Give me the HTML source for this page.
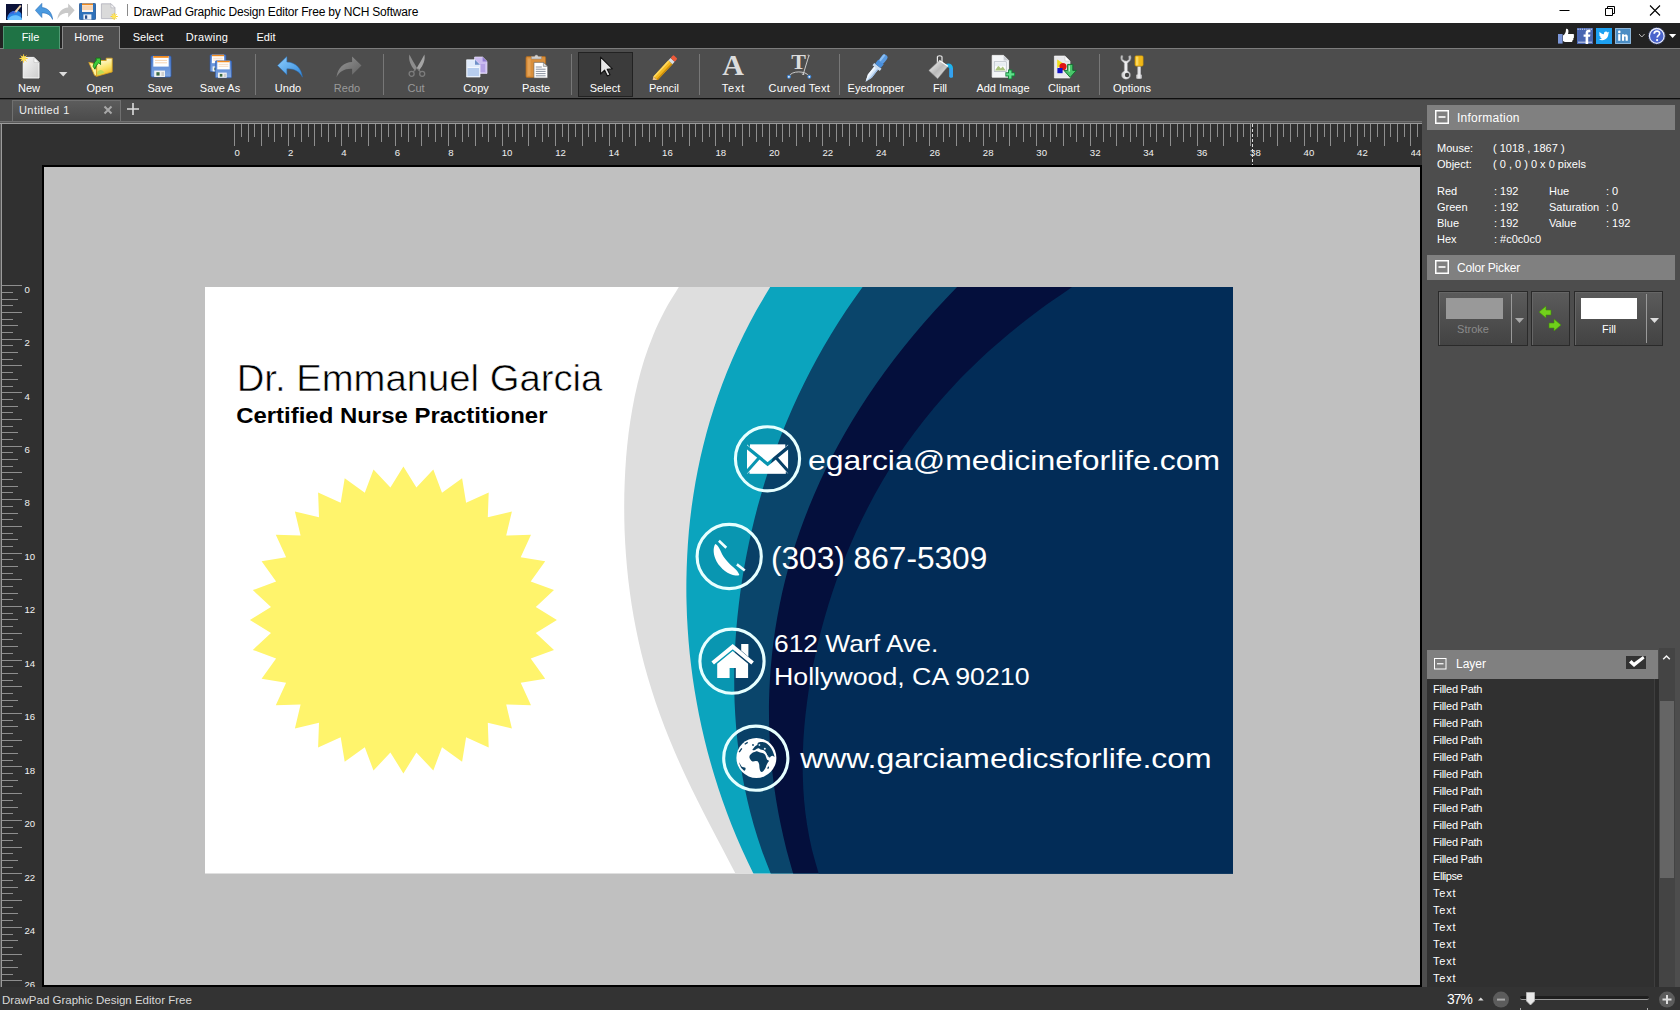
<!DOCTYPE html>
<html><head><meta charset="utf-8"><title>DrawPad</title>
<style>
*{box-sizing:border-box;margin:0;padding:0}
html,body{width:1680px;height:1010px;overflow:hidden;background:#4d4d4d;font-family:"Liberation Sans",sans-serif;font-size:11px;color:#fff}
.a{position:absolute}
.t{position:absolute;white-space:nowrap;line-height:1}
#titlebar{left:0;top:0;width:1680px;height:23px;background:#fff}
#tabrow{left:0;top:23px;width:1680px;height:25px;background:#222}
#tabline{left:0;top:48px;width:1680px;height:1px;background:#7d7d7d}
#ribbon{left:0;top:49px;width:1680px;height:49px;background:#4d4d4d}
#ribline{left:0;top:98px;width:1680px;height:2px;background:linear-gradient(#0e0e0e 0 60%,#3a3a3a 60% 100%)}
#docrow{left:0;top:100px;width:1422px;height:22px;background:#4d4d4d}
.sep{position:absolute;top:54px;width:1px;height:41px;background:#777}
.lbl{position:absolute;top:82px;width:90px;text-align:center;font-size:11px;line-height:12px;color:#fff;white-space:nowrap}
.lbl.dis{color:#9a9a9a}
.mtab{position:absolute;top:26px;height:23px;line-height:22px;text-align:center;font-size:11px;color:#fff}
</style></head><body>
<div id="titlebar" class="a"></div>
<div id="tabrow" class="a"></div>
<div id="ribbon" class="a"></div>
<div id="tabline" class="a"></div>
<div id="ribline" class="a"></div>
<div id="docrow" class="a"></div>
<!-- title text -->
<div class="t" id="title" style="left:133.5px;top:6px;font-size:12px;color:#000;letter-spacing:-0.19px">DrawPad Graphic Design Editor Free by NCH Software</div>
<!-- window buttons -->
<svg class="a" style="left:1540px;top:0" width="140" height="23" viewBox="0 0 140 23">
<path d="M19.5 10.5h10" stroke="#000" stroke-width="1" fill="none"/>
<path d="M65.5 8.5h7v7h-7z M67.5 8.5v-2h7v7h-2" stroke="#000" stroke-width="1" fill="none"/>
<path d="M110 5.5l10 10 M120 5.5l-10 10" stroke="#000" stroke-width="1.1" fill="none"/>
</svg>
<!-- menu tabs -->
<div class="mtab" style="left:3px;width:57px;background:#1f7345;border:1px solid #4f9a73;border-bottom:none;line-height:20px;text-indent:-2px">File</div>
<div class="mtab" style="left:62px;width:58px;background:#4d4d4d;border:1px solid #8a8a8a;border-bottom:none;line-height:20px;text-indent:-4px">Home</div>
<div class="mtab" style="left:120px;width:56px">Select</div>
<div class="mtab" style="left:177px;width:60px;letter-spacing:0.3px">Drawing</div>
<div class="mtab" style="left:240px;width:52px">Edit</div>
<!-- ribbon separators -->
<div class="sep" style="left:255px"></div>
<div class="sep" style="left:383px"></div>
<div class="sep" style="left:571px"></div>
<div class="sep" style="left:699px"></div>
<div class="sep" style="left:839px"></div>
<div class="sep" style="left:1099px"></div>
<!-- select pressed box -->
<div class="a" style="left:578px;top:52px;width:55px;height:45px;background:#3b3b3b;border:1px solid #222"></div>
<!-- labels -->
<div class="lbl" style="left:-16px">New</div>
<div class="lbl" style="left:55px">Open</div>
<div class="lbl" style="left:115px">Save</div>
<div class="lbl" style="left:175px">Save As</div>
<div class="lbl" style="left:243px">Undo</div>
<div class="lbl dis" style="left:302px">Redo</div>
<div class="lbl dis" style="left:371px">Cut</div>
<div class="lbl" style="left:431px">Copy</div>
<div class="lbl" style="left:491px">Paste</div>
<div class="lbl" style="left:560px">Select</div>
<div class="lbl" style="left:619px">Pencil</div>
<div class="lbl" style="left:688.5px;letter-spacing:0.8px">Text</div>
<div class="lbl" style="left:754.3px;letter-spacing:0.3px">Curved Text</div>
<div class="lbl" style="left:831px">Eyedropper</div>
<div class="lbl" style="left:895px">Fill</div>
<div class="lbl" style="left:958px">Add Image</div>
<div class="lbl" style="left:1019px">Clipart</div>
<div class="lbl" style="left:1087px">Options</div>
<!-- doc tab -->
<div class="a" style="left:12px;top:100px;width:109px;height:22px;background:linear-gradient(#5c5c5c,#4a4a4a);border:1px solid #707070;border-bottom:none"></div>
<div class="t" style="left:19px;top:105px;font-size:11px;color:#eee;letter-spacing:0.42px">Untitled 1</div>
<svg class="a" style="left:103px;top:105px" width="10" height="10"><path d="M1.5 1.5l7 7M8.5 1.5l-7 7" stroke="#a8a8a8" stroke-width="2"/></svg>
<svg class="a" style="left:126px;top:102px" width="14" height="14"><path d="M7 1v12M1 7h12" stroke="#ddd" stroke-width="1.6"/></svg>
<svg width="0" height="0" style="position:absolute"><defs>
<linearGradient id="gPage" x1="0" y1="0" x2="1" y2="1"><stop offset="0" stop-color="#f6f6f6"/><stop offset="1" stop-color="#cdcdcd"/></linearGradient>
<linearGradient id="gFlop" x1="0" y1="0" x2="0" y2="1"><stop offset="0" stop-color="#4f7fd0"/><stop offset="1" stop-color="#7ea6e2"/></linearGradient>
<linearGradient id="gUndo" x1="0" y1="0" x2="1" y2="1"><stop offset="0" stop-color="#8fd0ff"/><stop offset="1" stop-color="#2f86d8"/></linearGradient>
<linearGradient id="gRedo" x1="1" y1="0" x2="0" y2="1"><stop offset="0" stop-color="#9a9a9a"/><stop offset="1" stop-color="#5e5e5e"/></linearGradient>
<linearGradient id="gFold" x1="0" y1="0" x2="1" y2="1"><stop offset="0" stop-color="#fff3a6"/><stop offset="1" stop-color="#f0b91e"/></linearGradient>
<linearGradient id="gBuck" x1="0" y1="0" x2="1" y2="1"><stop offset="0" stop-color="#fdfdfd"/><stop offset="0.5" stop-color="#b9b9b9"/><stop offset="1" stop-color="#f0f0f0"/></linearGradient>


</defs></svg>
<!-- New -->
<svg class="a" style="left:18px;top:52px" width="26" height="28" viewBox="0 0 26 28">
 <path d="M5.2 5.400h10.800l5 5v15.600h-15.800z" fill="url(#gPage)" stroke="#fff" stroke-width="0.9"/>
 <path d="M16 5.400v5h5z" fill="#fbfbfb" stroke="#b5b5b5" stroke-width="0.5"/>
 <g stroke="#ffd23c" stroke-width="1"><path d="M5.600 2.400v8.200M1.500 6.500h8.200M2.700 3.600l5.800 5.800M8.500 3.600l-5.800 5.800"/></g>
 <circle cx="5.600" cy="6.500" r="2.400" fill="#ffe35a"/>
</svg>
<svg class="a" style="left:59px;top:72px" width="9" height="5"><path d="M0 0h8.400l-4.200 4.400z" fill="#ddd"/></svg>
<!-- Open -->
<svg class="a" style="left:86px;top:52px" width="30" height="28" viewBox="0 0 30 28">
 <defs><linearGradient id="gFold2" x1="0.300" y1="0" x2="0.600" y2="1"><stop offset="0" stop-color="#fffde8"/><stop offset="0.550" stop-color="#fbe46a"/><stop offset="1" stop-color="#f0b420"/></linearGradient></defs>
 <path d="M2.800 10.400L7.500 11.300L10.700 18.300V24.300L8.500 23.300Z" fill="#fff29c" stroke="#d69a1a" stroke-width="0.800"/>
 <path d="M10.700 11.900L15.100 8.500H20.200V6.200H26.200V19.900L10.700 24.300Z" fill="url(#gFold2)" stroke="#d8a21a" stroke-width="0.800"/>
 <path d="M11.400 20.600c.6-2.600 3.400-3.400 5.600-1.600l1.600 1.800-7.200 2.200z" fill="#b5dc5a" opacity=".9"/>
 <path d="M9.700 6.200L14.400 6L14.600 12.600L12.800 10.900C11.200 12 9.800 14.200 8.900 17.200L7.100 14.300C7.600 11.600 8.800 9.600 10.400 8.300Z" fill="#3ecb3e" stroke="#0c6e0c" stroke-width="0.800" stroke-linejoin="round"/>
</svg>
<!-- Save -->
<svg class="a" style="left:150px;top:55px" width="22" height="24" viewBox="-1 -1 22 24"><g>
 <rect x="0" y="0" width="20" height="21" rx="1.2" fill="url(#gFlop)" stroke="#2f5db3" stroke-width="0.8"/>
 <rect x="2.3" y="0" width="15.4" height="10.6" fill="#fff"/>
 <rect x="2.3" y="0" width="15.4" height="1.8" fill="#f08a1e"/>
 <path d="M4 4.4h12M4 6.8h12" stroke="#f4c9a0" stroke-width="0.8"/>
 <rect x="3.2" y="14.6" width="10.8" height="6.4" fill="#f2f2f2"/>
 <rect x="5.4" y="16.2" width="3.2" height="3.4" fill="#3a6a44"/>
 <rect x="10.4" y="16" width="2.6" height="4" fill="#cfcfcf"/>
</g></svg>
<!-- Save As -->
<svg class="a" style="left:209px;top:54px" width="18" height="19" viewBox="-1 -1 22 24"><g>
 <rect x="0" y="0" width="20" height="21" rx="1.2" fill="url(#gFlop)" stroke="#2f5db3" stroke-width="0.8"/>
 <rect x="2.3" y="0" width="15.4" height="10.6" fill="#fff"/>
 <rect x="2.3" y="0" width="15.4" height="1.8" fill="#f08a1e"/>
 <path d="M4 4.4h12M4 6.8h12" stroke="#f4c9a0" stroke-width="0.8"/>
 <rect x="3.2" y="14.6" width="10.8" height="6.4" fill="#f2f2f2"/>
 <rect x="5.4" y="16.2" width="3.2" height="3.4" fill="#3a6a44"/>
 <rect x="10.4" y="16" width="2.6" height="4" fill="#cfcfcf"/>
</g></svg>
<svg class="a" style="left:214px;top:60px" width="19" height="19" viewBox="-1 -1 22 23.500"><g>
 <rect x="0" y="0" width="20" height="21" rx="1.2" fill="url(#gFlop)" stroke="#2f5db3" stroke-width="0.8"/>
 <rect x="2.3" y="0" width="15.4" height="10.6" fill="#fff"/>
 <rect x="2.3" y="0" width="15.4" height="1.8" fill="#f08a1e"/>
 <path d="M4 4.4h12M4 6.8h12" stroke="#f4c9a0" stroke-width="0.8"/>
 <rect x="3.2" y="14.6" width="10.8" height="6.4" fill="#f2f2f2"/>
 <rect x="5.4" y="16.2" width="3.2" height="3.4" fill="#3a6a44"/>
 <rect x="10.4" y="16" width="2.6" height="4" fill="#cfcfcf"/>
</g></svg>
<!-- Undo / Redo -->
<svg class="a" style="left:277px;top:56px" width="26" height="22" viewBox="-0.500 -0.500 25 21"><path d="M0 8.6L9 0v5.2c8 .2 14 5.800 15 14.600c-3-5.600-8-8.400-15-8v5.600z" fill="url(#gUndo)" stroke="#2a6fb8" stroke-width="0.5"/></svg>
<svg class="a" style="left:336px;top:56px" width="26" height="22" viewBox="-0.500 -0.500 25 21"><g transform="translate(24 0) scale(-1 1)"><path d="M0 8.6L9 0v5.2c8 .2 14 5.800 15 14.600c-3-5.600-8-8.400-15-8v5.600z" fill="url(#gRedo)"/></g></svg>
<!-- Cut (disabled) -->
<svg class="a" style="left:406px;top:53px" width="22" height="27" viewBox="0 0 22 27">
 <path d="M3.400 1.600c-1 5 .6 10.400 5.600 16.200l2-2.800c-2.600-4.600-5.400-9-7.600-13.400z" fill="#8d8d8d"/>
 <path d="M18.400 1.600c1 5-.6 10.400-5.600 16.200l-2-2.800c2.600-4.600 5.400-9 7.600-13.400z" fill="#a4a4a4"/>
 <circle cx="5.600" cy="20.800" r="2.500" fill="none" stroke="#7c7c7c" stroke-width="1.300"/>
 <circle cx="16.200" cy="20.800" r="2.500" fill="none" stroke="#7c7c7c" stroke-width="1.300"/>
 <path d="M7.300 18.900l2.600-3M14.500 18.900l-2.600-3" stroke="#7c7c7c" stroke-width="1.300"/>
</svg>
<!-- Copy -->
<svg class="a" style="left:464px;top:55px" width="26" height="24" viewBox="0 0 26 24">
 <path d="M10.600 2h8l4.400 4.400v12h-12.400z" fill="#cbbcf0" stroke="#e9e2fb" stroke-width="0.7"/>
 <path d="M18.600 2v4.400h4.400z" fill="#8f7ad0"/>
 <path d="M13 9h8v8h-8z" fill="#b5a2e6"/>
 <path d="M2.600 4.800h8.400l5 5v12.200h-13.400z" fill="#dfeafb" stroke="#f5f9ff" stroke-width="0.7"/>
 <path d="M11 4.800v5h5z" fill="#6f8fc8"/>
 <path d="M3.600 12.800h11.400v8.200h-11.400z" fill="#b7cdee"/>
 <path d="M3.600 12.400h11.400" stroke="#fff" stroke-width="0.8"/>
</svg>
<!-- Paste -->
<svg class="a" style="left:524px;top:54px" width="26" height="26" viewBox="0 0 26 26">
 <rect x="2" y="2.600" width="19.600" height="20.800" rx="1.200" fill="#d98f3c" stroke="#b06a1e" stroke-width="0.8"/>
 <rect x="3.600" y="4.400" width="3" height="17.400" fill="#e8aa5e" opacity=".7"/>
 <path d="M7.400 2.600h3l1.200-1.600h1.600l1.200 1.600h3v2.400h-10z" fill="#d0d0d0" stroke="#8a8a8a" stroke-width="0.500"/>
 <path d="M10 8.400h9.400l4.200 4v11.600h-13.600z" fill="#fff" stroke="#666" stroke-width="0.600"/>
 <path d="M19.400 8.400v4h4.200z" fill="#ddd" stroke="#666" stroke-width="0.500"/>
 <path d="M11.800 13h6M11.800 15.200h9.800M11.800 17.400h9.800M11.800 19.600h9.800M11.800 21.800h9.800" stroke="#7d8694" stroke-width="0.900"/>
</svg>
<!-- Select cursor -->
<svg class="a" style="left:598px;top:55px" width="18" height="22" viewBox="0 0 18 22">
 <path d="M2.600 2.200v16.800l4-3.800 2.800 5.800 2.600-1.200-2.800-5.600 5.200-.4z" fill="#e8e8e8" stroke="#111" stroke-width="1.100" stroke-linejoin="round"/>
</svg>
<!-- Pencil -->
<svg class="a" style="left:652px;top:54px" width="28" height="26" viewBox="0 0 28 26">
 <g transform="rotate(-47 14 13)">
  <rect x="-1.500" y="10.200" width="22" height="5.600" fill="#f3b81f"/>
  <rect x="-1.500" y="10.200" width="22" height="1.700" fill="#ffd95e"/>
  <rect x="-1.500" y="14.300" width="22" height="1.500" fill="#c98a0c"/>
  <path d="M-1.500 10.200l-4.600 2.800 4.600 2.800z" fill="#f1c58a"/>
  <path d="M-4.500 12.100l-1.900.9 1.900.9z" fill="#111"/>
  <rect x="20.500" y="10.200" width="3.200" height="5.600" fill="#d9dde2"/>
  <rect x="23.700" y="10.200" width="4.200" height="5.600" rx="1.200" fill="#ee5a3a"/>
 </g>
</svg>
<!-- Text A -->
<div class="t" style="left:720.500px;top:49.500px;font-family:'Liberation Serif',serif;font-size:30px;line-height:30px;font-weight:bold;color:#dcdcdc;width:25px;text-align:center">A</div>
<!-- Curved text -->
<div class="t" style="left:790px;top:50.500px;font-family:'Liberation Serif',serif;font-size:22px;line-height:22px;font-weight:bold;color:#dcdcdc;width:17px;text-align:center">T</div>
<svg class="a" style="left:785px;top:52px" width="30" height="28" viewBox="0 0 30 28">
 <path d="M4 24.400c2.400-6 16.800-6 20.400 0" fill="none" stroke="#d8d8d8" stroke-width="0.900"/>
 <path d="M23.800 3.800l-5.600 18.600M22.600 3.200c.8-.2 1.800.2 2.200.8M16.800 21.800c.6.600 1.600.9 2.400.7" fill="none" stroke="#d8d8d8" stroke-width="0.900"/>
 <circle cx="3.900" cy="24.800" r="2" fill="#3f86d6"/><circle cx="3.900" cy="24.800" r="0.900" fill="#fff"/>
 <circle cx="24.300" cy="24.800" r="2" fill="#3f86d6"/><circle cx="24.300" cy="24.800" r="0.900" fill="#fff"/>
</svg>
<!-- Eyedropper -->
<svg class="a" style="left:862px;top:52px" width="30" height="30" viewBox="0 0 30 30">
 <g transform="rotate(-52 15 15)">
  <path d="M-3.600 15l7-2.500h11v5h-11z" fill="#d4e6f8"/>
  <path d="M-3.600 15l7-2.500h11v1.800h-11z" fill="#f2f8ff"/>
  <path d="M3.400 17.500h11v-1.200h-11l-7-1.300z" fill="#9dbfe6"/>
  <rect x="13.600" y="10.400" width="2.800" height="9.200" fill="#c8dcf2"/>
  <rect x="16.400" y="11.400" width="5.400" height="7.200" rx="1" fill="#4a8fdc"/>
  <rect x="21" y="12" width="9" height="6" rx="2.800" fill="#5a9be2"/>
  <rect x="21.500" y="12.400" width="8" height="2" rx="1" fill="#8fc0f2"/>
 </g>
</svg>
<!-- Fill bucket -->
<svg class="a" style="left:926px;top:52px" width="30" height="30" viewBox="0 0 30 30">
 <path d="M20 12c3.800-1.600 6.800.6 7 4.200v8.200c0 1.600-3.600 1.600-3.600 0v-7.200c0-1.800-1.200-2.400-2.600-1.800z" fill="#1cb4ee"/>
 <path d="M23.400 16.600v7.800c0 1.400 3.400 1.400 3.400 0v-7.600z" fill="#36a0f0"/>
 <path d="M11.400 11.400v-6.600c0-1.400 4.600-1.400 4.600 0v5.400" fill="none" stroke="#eaeaea" stroke-width="1.200"/>
 <path d="M2.800 18.400l10.600-10 8.600 5.800-10.400 12.600z" fill="url(#gBuck)" stroke="#8d8d8d" stroke-width="0.500"/>
 <path d="M13.400 8.400l8.600 5.800" stroke="#fff" stroke-width="1.200"/>
</svg>
<!-- Add Image -->
<svg class="a" style="left:990px;top:53px" width="28" height="28" viewBox="0 0 28 28">
 <path d="M2.200 2.400h11.400l5 5v16.800h-16.400z" fill="#f4f6f8" stroke="#fff" stroke-width="0.800"/>
 <path d="M13.600 2.400v5h5z" fill="#c9ccd2"/>
 <rect x="4.200" y="8.800" width="12" height="9.600" fill="#fdfdfd" stroke="#9aa3ad" stroke-width="0.600"/>
 <path d="M5 17.600l3.400-5 2.400 3 2-2.200 2.800 4.200z" fill="#a9c47c"/>
 <rect x="5" y="9.600" width="10.400" height="3.600" fill="#e8eef2"/>
 <path d="M20.200 16.600v9.600M15.400 21.400h9.600" stroke="#15803a" stroke-width="4.200"/>
 <path d="M20.200 17.400v8M16.200 21.400h8" stroke="#5fe08a" stroke-width="2.400"/>
</svg>
<!-- Clipart -->
<svg class="a" style="left:1052px;top:53px" width="30" height="28" viewBox="0 0 30 28">
 <path d="M2.400 3h10.600l5 5v17h-15.600z" fill="#e9e9ec" stroke="#fff" stroke-width="0.600"/>
 <path d="M13 3v5h5z" fill="#fff" stroke="#aaa" stroke-width="0.400"/>
 <path d="M5.200 6.400l5.800 3.800-5.800 5z" fill="#f0de1a"/>
 <circle cx="11" cy="13.600" r="3.600" fill="#e01414"/>
 <rect x="5.400" y="15" width="5.200" height="5.200" fill="#1212c8"/>
 <path d="M15.600 11.400h5.200v6h3.600l-6.200 7-6.200-7h3.600z" fill="#49c56a" stroke="#0e6a2c" stroke-width="0.900"/>
 <path d="M16.600 12.400h1.400v6h-1.400z" fill="#b8f2c6"/>
</svg>
<!-- Options -->
<svg class="a" style="left:1118px;top:53px" width="28" height="28" viewBox="0 0 28 28">
 <defs><linearGradient id="gWr" x1="0" y1="0" x2="1" y2="0"><stop offset="0" stop-color="#bdbdbd"/><stop offset="0.5" stop-color="#f4f4f6"/><stop offset="1" stop-color="#b4b4b8"/></linearGradient></defs>
 <path d="M3.100 2.400c-1 2.600-.2 5 1.600 6.400l1.500 1.200v8c-2.400 1-3.200 3.200-2.600 5.200.6 2 2.400 3 4.400 3s3.800-1 4.400-3c.6-2-.2-4.200-2.800-5.200v-8l1.500-1.200c1.800-1.400 2.600-3.800 1.600-6.200l-2 .4.200 3.400-2.200 1.600-2-.2-2.200-1.600.4-3.400z" fill="url(#gWr)" stroke="#8a8a8a" stroke-width="0.500"/>
 <circle cx="9" cy="22" r="2.200" fill="#444"/>
 <rect x="16.900" y="2.700" width="8.300" height="10.500" rx="1.400" fill="#f0b818" stroke="#b8860b" stroke-width="0.500"/>
 <rect x="18" y="3.600" width="2.400" height="8.800" fill="#ffe070" opacity=".8"/>
 <rect x="19.400" y="13.600" width="3.500" height="8.600" fill="url(#gWr)"/>
 <rect x="18.200" y="21.600" width="5.700" height="4.200" rx="0.800" fill="url(#gWr)"/>
</svg>
<!-- titlebar quick access -->
<svg class="a" style="left:6px;top:4px" width="16" height="16" viewBox="0 0 16 16">
 <rect width="16" height="16" fill="#0b1238"/>
 <path d="M1 14.500c1-5 5-8.500 11-7.500 2.500.5 3.500 2.500 3.500 4v4.500h-14.500z" fill="#2b86e8"/>
 <path d="M2 15c2-3 6-4.500 9.500-3.500 2 .6 3.500 1.500 4.500 3v1.500h-14z" fill="#69c3ff"/>
 <path d="M2.500 10.500c1.500-2.500 4.500-4 7-3.500l-1 2.500c-2-.3-4 .3-6 1z" fill="#3a63d8"/>
 <path d="M8.500 7.500l5.500-6.500 1.500 1-5 6.500z" fill="#e8cfa8"/>
 <path d="M8.800 7.200l1.600 1.200-1.800 1.400c-.8-.4-.8-1.600.2-2.600z" fill="#6a7cc8"/>
</svg>
<div class="a" style="left:27px;top:4px;width:1px;height:12px;background:#8a8a8a"></div>
<div class="a" style="left:127px;top:4px;width:1px;height:12px;background:#8a8a8a"></div>
<svg class="a" style="left:35px;top:3px" width="18" height="17" viewBox="-0.500 -0.500 25 21" preserveAspectRatio="none"><path d="M0 8.6L9 0v5.2c8 .2 14 5.800 15 14.600c-3-5.600-8-8.400-15-8v5.600z" fill="#4a9ae0" stroke="#2a6fb8" stroke-width="0.800"/></svg>
<svg class="a" style="left:57px;top:3px" width="18" height="17" viewBox="-0.500 -0.500 25 21" preserveAspectRatio="none"><g transform="translate(24 0) scale(-1 1)"><path d="M0 8.6L9 0v5.2c8 .2 14 5.800 15 14.600c-3-5.600-8-8.400-15-8v5.600z" fill="#c9c9c9"/></g></svg>
<svg class="a" style="left:79px;top:3px" width="17" height="17" viewBox="0 0 17 17">
 <rect x="0.400" y="0.400" width="16.200" height="16.200" rx="1" fill="#2f72ba" stroke="#1d4f8f" stroke-width="0.800"/>
 <rect x="3" y="0.600" width="11" height="8.400" fill="#fdf3ea"/>
 <rect x="3" y="0.600" width="11" height="1.600" fill="#f08a1e"/>
 <path d="M3 4h11M3 6h11" stroke="#f5b87c" stroke-width="1"/>
 <rect x="4.400" y="11.400" width="8" height="5.200" fill="#eef3fa"/>
 <rect x="6" y="12.400" width="2.200" height="3.400" fill="#2a4f8c"/>
</svg>
<svg class="a" style="left:100px;top:3px" width="18" height="18" viewBox="0 0 18 18">
 <path d="M1.400 0.800h9.600l4 4v10.800h-13.600z" fill="#dadada" stroke="#a9a9b4" stroke-width="0.700"/>
 <path d="M11 0.800v4h4z" fill="#f4f4f4" stroke="#a9a9b4" stroke-width="0.500"/>
 <g stroke="#ffd21e" stroke-width="1"><path d="M14.200 10v7M10.700 13.500h7M11.800 11.100l4.800 4.800M16.600 11.100l-4.800 4.800"/></g>
 <circle cx="14.200" cy="13.500" r="1.900" fill="#ffe65a"/>
</svg>
<!-- social icons -->
<svg class="a" style="left:1558px;top:28px" width="17" height="16" viewBox="0 0 17 16">
 <rect x="0" y="6" width="4.600" height="9.600" fill="#7b96d8"/>
 <path d="M5 7.400c2-.8 3-3.200 3-6.400 1.600-.6 2.800.8 2.400 3.200l-.4 1.800h5c1.200 0 1.600 1.400.6 2 .8.600.6 1.800-.4 2.200.6.800.2 1.800-.8 2 .4.800-.2 1.800-1.400 1.800h-5c-1.400 0-2.200-.6-3-1z" fill="#fff"/>
</svg>
<svg class="a" style="left:1577px;top:28px" width="16" height="16" viewBox="0 0 16 16">
 <rect width="16" height="16" fill="#4a67b2"/>
 <path d="M0.500 1.200h15" stroke="#dfe6f6" stroke-width="1" stroke-dasharray="1.200 1"/>
 <path d="M1 14.200h14" stroke="#c9d3ee" stroke-width="1"/>
 <path d="M8.600 16v-7.200h-2v-2.400h2v-1.600c0-2 1.200-3 3-3h1.800v2.400h-1.200c-.8 0-1 .4-1 1v1.200h2.200l-.4 2.400h-1.800v7.200z" fill="#fff"/>
</svg>
<svg class="a" style="left:1596px;top:28px" width="16" height="16" viewBox="0 0 16 16">
 <rect width="16" height="16" fill="#1da1f2"/>
 <path d="M13.200 4.600c-.4.200-.8.400-1.200.4.400-.2.800-.8 1-1.200-.4.200-.9.400-1.400.6-.4-.4-1-.8-1.600-.8-1.400 0-2.400 1.400-2 2.600-1.800 0-3.400-1-4.400-2.200-.6 1-.2 2.200.6 2.800-.4 0-.6-.2-1-.2 0 1 .8 2 1.800 2.200-.4 0-.6.200-1 0 .2.800 1 1.600 2 1.600-.8.600-2 1-3.200.8 1 .6 2.200 1 3.400 1 4.200 0 6.400-3.600 6.200-6.600.4-.2.800-.6 1-1z" fill="#fff"/>
</svg>
<svg class="a" style="left:1615px;top:28px" width="16" height="16" viewBox="0 0 16 16">
 <rect width="16" height="16" fill="#4b8dc4"/>
 <path d="M0.500 0.500h15v15h-15z" fill="none" stroke="#8db6da" stroke-width="1"/>
 <rect x="3.200" y="6.200" width="2.200" height="6.600" fill="#fff"/>
 <circle cx="4.300" cy="3.900" r="1.300" fill="#fff"/>
 <path d="M7 6.200h2.100v1c.6-1 3.700-1.600 3.700 1.400v4.200h-2.200v-3.600c0-1.500-1.500-1.300-1.500 0v3.600h-2.100z" fill="#fff"/>
</svg>
<svg class="a" style="left:1638px;top:33px" width="8" height="6"><path d="M1 1l2.800 3 2.800-3" stroke="#bdbdbd" stroke-width="1" fill="none"/></svg>
<svg class="a" style="left:1648px;top:27px" width="18" height="18" viewBox="0 0 18 18">
 <circle cx="8.800" cy="8.900" r="7.400" fill="#4a64cc" stroke="#eef0ff" stroke-width="1.300"/>
 <circle cx="8.800" cy="8.900" r="8.300" fill="none" stroke="#5f76c8" stroke-width="0.600" stroke-dasharray="1.500 1"/>
 <path d="M6.200 6.800c0-3.600 5.400-3.600 5.400-.4 0 2-2.400 2-2.400 4.200" fill="none" stroke="#fff" stroke-width="1.700"/>
 <circle cx="9.100" cy="13.100" r="1.100" fill="#fff"/>
</svg>
<svg class="a" style="left:1669px;top:34px" width="8" height="5"><path d="M0 0h7.200l-3.600 4z" fill="#fff"/></svg>
<style>.rl{font-size:9.6px;color:#f0f0f0}</style>
<div class="a" style="left:0;top:121px;width:1422px;height:1px;background:#707070"></div>
<div class="a" style="left:0;top:122px;width:1422px;height:1px;background:#585858"></div>
<div class="a" style="left:0;top:123px;width:1422px;height:1px;background:#9c9c9c"></div>
<div class="a" style="left:0;top:124px;width:1422px;height:863px;background:#303030"></div>
<div class="a" style="left:0;top:124px;width:1px;height:863px;background:#5a5a5a"></div>
<div class="a" style="left:1px;top:124px;width:1px;height:863px;background:#9c9c9c"></div>
<div class="a" style="left:42px;top:165px;width:1380px;height:822px;background:#000"></div>
<div class="a" style="left:44px;top:167px;width:1376px;height:818px;background:#c0c0c0"></div>
<svg class="a" style="left:0;top:124px" width="1422" height="41" viewBox="0 0 1422 41" shape-rendering="crispEdges"><path d="M234.5 0v22M241.5 0v13M248.5 0v18M254.5 0v13M261.5 0v22M268.5 0v13M274.5 0v18M281.5 0v13M288.5 0v22M294.5 0v13M301.5 0v18M308.5 0v13M314.5 0v22M321.5 0v13M328.5 0v18M335.5 0v13M341.5 0v22M348.5 0v13M355.5 0v18M361.5 0v13M368.5 0v22M375.5 0v13M381.5 0v18M388.5 0v13M395.5 0v22M401.5 0v13M408.5 0v18M415.5 0v13M421.5 0v22M428.5 0v13M435.5 0v18M441.5 0v13M448.5 0v22M455.5 0v13M462.5 0v18M468.5 0v13M475.5 0v22M482.5 0v13M488.5 0v18M495.5 0v13M502.5 0v22M508.5 0v13M515.5 0v18M522.5 0v13M528.5 0v22M535.5 0v13M542.5 0v18M548.5 0v13M555.5 0v22M562.5 0v13M568.5 0v18M575.5 0v13M582.5 0v22M588.5 0v13M595.5 0v18M602.5 0v13M609.5 0v22M615.5 0v13M622.5 0v18M629.5 0v13M635.5 0v22M642.5 0v13M649.5 0v18M655.5 0v13M662.5 0v22M669.5 0v13M675.5 0v18M682.5 0v13M689.5 0v22M695.5 0v13M702.5 0v18M709.5 0v13M715.5 0v22M722.5 0v13M729.5 0v18M735.5 0v13M742.5 0v22M749.5 0v13M756.5 0v18M762.5 0v13M769.5 0v22M776.5 0v13M782.5 0v18M789.5 0v13M796.5 0v22M802.5 0v13M809.5 0v18M816.5 0v13M822.5 0v22M829.5 0v13M836.5 0v18M842.5 0v13M849.5 0v22M856.5 0v13M862.5 0v18M869.5 0v13M876.5 0v22M883.5 0v13M889.5 0v18M896.5 0v13M903.5 0v22M909.5 0v13M916.5 0v18M923.5 0v13M929.5 0v22M936.5 0v13M943.5 0v18M949.5 0v13M956.5 0v22M963.5 0v13M969.5 0v18M976.5 0v13M983.5 0v22M989.5 0v13M996.5 0v18M1003.5 0v13M1009.5 0v22M1016.5 0v13M1023.5 0v18M1030.5 0v13M1036.5 0v22M1043.5 0v13M1050.5 0v18M1056.5 0v13M1063.5 0v22M1070.5 0v13M1076.5 0v18M1083.5 0v13M1090.5 0v22M1096.5 0v13M1103.5 0v18M1110.5 0v13M1116.5 0v22M1123.5 0v13M1130.5 0v18M1136.5 0v13M1143.5 0v22M1150.5 0v13M1156.5 0v18M1163.5 0v13M1170.5 0v22M1177.5 0v13M1183.5 0v18M1190.5 0v13M1197.5 0v22M1203.5 0v13M1210.5 0v18M1217.5 0v13M1223.5 0v22M1230.5 0v13M1237.5 0v18M1243.5 0v13M1250.5 0v22M1257.5 0v13M1263.5 0v18M1270.5 0v13M1277.5 0v22M1283.5 0v13M1290.5 0v18M1297.5 0v13M1304.5 0v22M1310.5 0v13M1317.5 0v18M1324.5 0v13M1330.5 0v22M1337.5 0v13M1344.5 0v18M1350.5 0v13M1357.5 0v22M1364.5 0v13M1370.5 0v18M1377.5 0v13M1384.5 0v22M1390.5 0v13M1397.5 0v18M1404.5 0v13M1410.5 0v22M1417.5 0v13" stroke="#8e8e8e" stroke-width="1" fill="none"/></svg>
<div class="t rl" style="left:234.4px;top:147.5px">0</div>
<div class="t rl" style="left:287.9px;top:147.5px">2</div>
<div class="t rl" style="left:341.3px;top:147.5px">4</div>
<div class="t rl" style="left:394.8px;top:147.5px">6</div>
<div class="t rl" style="left:448.2px;top:147.5px">8</div>
<div class="t rl" style="left:501.7px;top:147.5px">10</div>
<div class="t rl" style="left:555.2px;top:147.5px">12</div>
<div class="t rl" style="left:608.6px;top:147.5px">14</div>
<div class="t rl" style="left:662.1px;top:147.5px">16</div>
<div class="t rl" style="left:715.5px;top:147.5px">18</div>
<div class="t rl" style="left:769.0px;top:147.5px">20</div>
<div class="t rl" style="left:822.5px;top:147.5px">22</div>
<div class="t rl" style="left:875.9px;top:147.5px">24</div>
<div class="t rl" style="left:929.4px;top:147.5px">26</div>
<div class="t rl" style="left:982.8px;top:147.5px">28</div>
<div class="t rl" style="left:1036.3px;top:147.5px">30</div>
<div class="t rl" style="left:1089.8px;top:147.5px">32</div>
<div class="t rl" style="left:1143.2px;top:147.5px">34</div>
<div class="t rl" style="left:1196.7px;top:147.5px">36</div>
<div class="t rl" style="left:1250.1px;top:147.5px">38</div>
<div class="t rl" style="left:1303.6px;top:147.5px">40</div>
<div class="t rl" style="left:1357.1px;top:147.5px">42</div>
<div class="t rl" style="left:1410.5px;top:147.5px;overflow:hidden;width:10.5px">44</div>
<svg class="a" style="left:2px;top:165px" width="40" height="822" viewBox="0 0 40 822" shape-rendering="crispEdges"><path d="M0 120.5h20M0 127.5h11M0 134.5h16M0 140.5h11M0 147.5h20M0 154.5h11M0 160.5h16M0 167.5h11M0 174.5h20M0 180.5h11M0 187.5h16M0 194.5h11M0 200.5h20M0 207.5h11M0 214.5h16M0 221.5h11M0 227.5h20M0 234.5h11M0 241.5h16M0 247.5h11M0 254.5h20M0 261.5h11M0 267.5h16M0 274.5h11M0 281.5h20M0 287.5h11M0 294.5h16M0 301.5h11M0 307.5h20M0 314.5h11M0 321.5h16M0 327.5h11M0 334.5h20M0 341.5h11M0 348.5h16M0 354.5h11M0 361.5h20M0 368.5h11M0 374.5h16M0 381.5h11M0 388.5h20M0 394.5h11M0 401.5h16M0 408.5h11M0 414.5h20M0 421.5h11M0 428.5h16M0 434.5h11M0 441.5h20M0 448.5h11M0 454.5h16M0 461.5h11M0 468.5h20M0 474.5h11M0 481.5h16M0 488.5h11M0 495.5h20M0 501.5h11M0 508.5h16M0 515.5h11M0 521.5h20M0 528.5h11M0 535.5h16M0 541.5h11M0 548.5h20M0 555.5h11M0 561.5h16M0 568.5h11M0 575.5h20M0 581.5h11M0 588.5h16M0 595.5h11M0 601.5h20M0 608.5h11M0 615.5h16M0 621.5h11M0 628.5h20M0 635.5h11M0 642.5h16M0 648.5h11M0 655.5h20M0 662.5h11M0 668.5h16M0 675.5h11M0 682.5h20M0 688.5h11M0 695.5h16M0 702.5h11M0 708.5h20M0 715.5h11M0 722.5h16M0 728.5h11M0 735.5h20M0 742.5h11M0 748.5h16M0 755.5h11M0 762.5h20M0 769.5h11M0 775.5h16M0 782.5h11M0 789.5h20M0 795.5h11M0 802.5h16M0 809.5h11M0 815.5h20" stroke="#8e8e8e" stroke-width="1" fill="none"/></svg>
<div class="t rl" style="left:24.4px;top:284.6px">0</div>
<div class="t rl" style="left:24.4px;top:338.1px">2</div>
<div class="t rl" style="left:24.4px;top:391.5px">4</div>
<div class="t rl" style="left:24.4px;top:445.0px">6</div>
<div class="t rl" style="left:24.4px;top:498.4px">8</div>
<div class="t rl" style="left:24.4px;top:551.9px">10</div>
<div class="t rl" style="left:24.4px;top:605.4px">12</div>
<div class="t rl" style="left:24.4px;top:658.8px">14</div>
<div class="t rl" style="left:24.4px;top:712.3px">16</div>
<div class="t rl" style="left:24.4px;top:765.7px">18</div>
<div class="t rl" style="left:24.4px;top:819.2px">20</div>
<div class="t rl" style="left:24.4px;top:872.7px">22</div>
<div class="t rl" style="left:24.4px;top:926.1px">24</div>
<div class="t rl" style="left:24.4px;top:979.6px">26</div>
<div class="a" style="left:1252px;top:124px;width:1px;height:41px;background:repeating-linear-gradient(#ddd 0 3px,transparent 3px 5px)"></div>
<svg class="a" style="left:0;top:0" width="1680" height="1010" viewBox="0 0 1680 1010">
<defs><clipPath id="cc"><rect x="205" y="287" width="1028" height="586.5"/></clipPath></defs>
<rect x="205" y="287" width="1028" height="586.5" fill="#fff"/>
<g clip-path="url(#cc)">
<path d="M694.0 261.5C689.1 269.7 684.3 277.8 679.4 286.0C674.5 294.2 669.1 302.3 664.8 310.5C660.4 318.7 656.7 326.8 653.3 335.0C649.9 343.2 647.0 351.3 644.3 359.5C641.7 367.7 639.5 375.8 637.5 384.0C635.5 392.2 633.8 400.3 632.4 408.5C630.9 416.7 629.7 424.8 628.6 433.0C627.6 441.2 626.8 449.3 626.1 457.5C625.5 465.7 625.0 473.8 624.7 482.0C624.3 490.2 624.2 498.3 624.2 506.5C624.2 514.7 624.3 522.8 624.6 531.0C624.9 539.2 625.4 547.3 626.0 555.5C626.6 563.7 627.4 571.8 628.3 580.0C629.3 588.2 630.4 596.3 631.6 604.5C632.9 612.7 634.3 620.8 636.0 629.0C637.6 637.2 639.4 645.3 641.4 653.5C643.4 661.7 645.6 669.8 648.0 678.0C650.4 686.2 653.0 694.3 655.7 702.5C658.5 710.7 661.5 718.8 664.6 727.0C667.8 735.2 671.1 743.3 674.6 751.5C678.1 759.7 681.8 767.8 685.6 776.0C689.4 784.2 693.4 792.3 697.5 800.5C701.5 808.7 705.8 816.8 710.0 825.0C714.2 833.2 718.6 841.3 722.9 849.5C727.1 857.7 731.4 865.8 735.7 874.0C740.0 882.2 744.3 890.3 748.5 898.5L1300 898.5L1300 261.5Z" fill="#dedede"/>
<path d="M785.3 261.5C780.5 269.7 775.7 277.8 770.8 286.0C766.0 294.2 760.9 302.3 756.3 310.5C751.8 318.7 747.5 326.8 743.5 335.0C739.5 343.2 735.7 351.3 732.2 359.5C728.6 367.7 725.4 375.8 722.3 384.0C719.2 392.2 716.4 400.3 713.8 408.5C711.1 416.7 708.7 424.8 706.5 433.0C704.3 441.2 702.3 449.3 700.4 457.5C698.6 465.7 697.0 473.8 695.5 482.0C694.1 490.2 692.8 498.3 691.7 506.5C690.6 514.7 689.7 522.8 688.9 531.0C688.2 539.2 687.6 547.3 687.2 555.5C686.8 563.7 686.5 571.8 686.4 580.0C686.3 588.2 686.3 596.3 686.6 604.5C686.8 612.7 687.1 620.8 687.7 629.0C688.2 637.2 688.9 645.3 689.7 653.5C690.6 661.7 691.6 669.8 692.7 678.0C693.9 686.2 695.2 694.3 696.7 702.5C698.1 710.7 699.8 718.8 701.6 727.0C703.4 735.2 705.4 743.3 707.5 751.5C709.7 759.7 712.0 767.8 714.5 776.0C717.0 784.2 719.6 792.3 722.5 800.5C725.4 808.7 728.4 816.8 731.6 825.0C734.9 833.2 738.3 841.3 742.0 849.5C745.6 857.7 749.7 865.8 753.6 874.0C757.5 882.2 761.3 890.3 765.2 898.5L1300 898.5L1300 261.5Z" fill="#0ba4be"/>
<path d="M880.4 261.5C874.7 269.7 869.0 277.8 863.3 286.0C857.6 294.2 851.6 302.3 846.1 310.5C840.7 318.7 835.5 326.8 830.6 335.0C825.6 343.2 820.9 351.3 816.5 359.5C812.0 367.7 807.8 375.8 803.8 384.0C799.7 392.2 795.9 400.3 792.3 408.5C788.7 416.7 785.3 424.8 782.0 433.0C778.8 441.2 775.8 449.3 772.9 457.5C770.0 465.7 767.3 473.8 764.8 482.0C762.3 490.2 759.9 498.3 757.7 506.5C755.5 514.7 753.5 522.8 751.6 531.0C749.7 539.2 748.0 547.3 746.4 555.5C744.8 563.7 743.4 571.8 742.1 580.0C740.9 588.2 739.7 596.3 738.8 604.5C737.8 612.7 737.0 620.8 736.3 629.0C735.7 637.2 735.1 645.3 734.8 653.5C734.4 661.7 734.2 669.8 734.2 678.0C734.2 686.2 734.3 694.3 734.6 702.5C735.0 710.7 735.4 718.8 736.1 727.0C736.8 735.2 737.6 743.3 738.7 751.5C739.7 759.7 741.0 767.8 742.4 776.0C743.9 784.2 745.5 792.3 747.4 800.5C749.3 808.7 751.4 816.8 753.7 825.0C756.1 833.2 758.7 841.3 761.5 849.5C764.4 857.7 767.8 865.8 770.9 874.0C774.0 882.2 777.1 890.3 780.2 898.5L1300 898.5L1300 261.5Z" fill="#0a456b"/>
<path d="M981.2 261.5C973.5 269.7 965.8 277.8 958.0 286.0C950.3 294.2 942.3 302.3 934.9 310.5C927.5 318.7 920.4 326.8 913.6 335.0C906.8 343.2 900.3 351.3 894.0 359.5C887.8 367.7 881.8 375.8 876.1 384.0C870.4 392.2 865.0 400.3 859.8 408.5C854.6 416.7 849.7 424.8 845.0 433.0C840.3 441.2 835.9 449.3 831.6 457.5C827.4 465.7 823.5 473.8 819.7 482.0C816.0 490.2 812.5 498.3 809.2 506.5C805.9 514.7 802.8 522.8 799.9 531.0C797.0 539.2 794.4 547.3 791.9 555.5C789.5 563.7 787.2 571.8 785.2 580.0C783.1 588.2 781.3 596.3 779.7 604.5C778.0 612.7 776.6 620.8 775.3 629.0C774.0 637.2 773.0 645.3 772.1 653.5C771.2 661.7 770.5 669.8 770.0 678.0C769.5 686.2 769.2 694.3 769.0 702.5C768.9 710.7 769.0 718.8 769.2 727.0C769.4 735.2 769.8 743.3 770.4 751.5C771.0 759.7 771.8 767.8 772.8 776.0C773.7 784.2 774.9 792.3 776.2 800.5C777.5 808.7 779.1 816.8 780.8 825.0C782.5 833.2 784.4 841.3 786.4 849.5C788.5 857.7 791.0 865.8 793.3 874.0C795.5 882.2 797.8 890.3 800.1 898.5L1300 898.5L1300 261.5Z" fill="#040f3c"/>
<path d="M1108.5 261.5C1096.8 269.7 1085.2 277.8 1073.5 286.0C1061.9 294.2 1049.6 302.3 1038.6 310.5C1027.6 318.7 1017.3 326.8 1007.5 335.0C997.7 343.2 988.5 351.3 979.8 359.5C971.1 367.7 963.0 375.8 955.3 384.0C947.6 392.2 940.4 400.3 933.5 408.5C926.7 416.7 920.3 424.8 914.2 433.0C908.1 441.2 902.4 449.3 897.0 457.5C891.6 465.7 886.6 473.8 881.8 482.0C877.0 490.2 872.6 498.3 868.4 506.5C864.1 514.7 860.2 522.8 856.4 531.0C852.7 539.2 849.2 547.3 845.9 555.5C842.6 563.7 839.5 571.8 836.6 580.0C833.7 588.2 831.0 596.3 828.5 604.5C826.0 612.7 823.7 620.8 821.5 629.0C819.4 637.2 817.4 645.3 815.6 653.5C813.8 661.7 812.2 669.8 810.7 678.0C809.3 686.2 808.0 694.3 807.0 702.5C805.9 710.7 805.0 718.8 804.3 727.0C803.6 735.2 803.1 743.3 802.9 751.5C802.6 759.7 802.6 767.8 802.8 776.0C803.0 784.2 803.4 792.3 804.1 800.5C804.8 808.7 805.8 816.8 807.1 825.0C808.4 833.2 810.0 841.3 811.9 849.5C813.9 857.7 816.5 865.8 818.8 874.0C821.1 882.2 823.4 890.3 825.7 898.5L1300 898.5L1300 261.5Z" fill="#022c57"/>
</g>
<polygon points="403.4,466.5 416.4,487.6 433.3,469.4 442.0,492.7 462.1,478.2 466.1,502.7 488.7,492.4 487.8,517.2 511.9,511.5 506.2,535.6 531.0,534.7 520.7,557.3 545.2,561.3 530.7,581.4 554.0,590.1 535.8,607.0 556.9,620.0 535.8,633.0 554.0,649.9 530.7,658.6 545.2,678.7 520.7,682.7 531.0,705.3 506.2,704.4 511.9,728.5 487.8,722.8 488.7,747.6 466.1,737.3 462.1,761.8 442.0,747.3 433.3,770.6 416.4,752.4 403.4,773.5 390.4,752.4 373.5,770.6 364.8,747.3 344.7,761.8 340.7,737.3 318.1,747.6 319.0,722.8 294.9,728.5 300.6,704.4 275.8,705.3 286.1,682.7 261.6,678.7 276.1,658.6 252.8,649.9 271.0,633.0 249.9,620.0 271.0,607.0 252.8,590.1 276.1,581.4 261.6,561.3 286.1,557.3 275.8,534.7 300.6,535.6 294.9,511.5 319.0,517.2 318.1,492.4 340.7,502.7 344.7,478.2 364.8,492.7 373.5,469.4 390.4,487.6" fill="#fff46c"/>
<circle cx="767.5" cy="458.8" r="32.1" fill="rgba(0,30,70,0.10)" stroke="#e6ffff" stroke-width="3.1"/>
<circle cx="729.2" cy="556.5" r="32.1" fill="rgba(0,30,70,0.10)" stroke="#e6ffff" stroke-width="3.1"/>
<circle cx="732.0" cy="661.2" r="32.1" fill="rgba(0,30,70,0.10)" stroke="#e6ffff" stroke-width="3.1"/>
<circle cx="755.8" cy="758.2" r="32.1" fill="rgba(0,30,70,0.10)" stroke="#e6ffff" stroke-width="3.1"/>
<defs><mask id="envm"><rect x="747.0" y="444.2" width="41.3" height="29.7" fill="#fff"/>
<path d="M746.0 446.4L767.6 464.2L789.3 446.4" stroke="#000" stroke-width="3.3" fill="none" stroke-linejoin="miter"/>
<path d="M746.0 472.4L759.1 457.7M789.3 472.4L776.1 457.7" stroke="#000" stroke-width="3" fill="none"/>
<path d="M746.0 443.2h4v4zM789.3 443.2h-4v4zM746.0 474.9h3.5v-3.5zM789.3 474.9h-3.5v-3.5z" fill="#000"/>
</mask></defs>
<rect x="747.0" y="444.2" width="41.3" height="29.7" fill="#fff" mask="url(#envm)"/>
<path d="M715.2 544.1C712.6 548.6 713.4 555.4 716.6 561.4C720.6 568.6 728.6 574.6 735.4 575.5C737.2 575.7 738.6 575.4 739.4 574.9C738.4 572 736.4 569.8 733.6 567.4C729.6 564.2 726.2 560.6 723.6 556.8C721.4 553.2 720.4 550.4 718.8 547.6C717.8 546 716.6 544.6 715.2 544.1Z" fill="#fff"/>
<path d="M718.9 540.8L726.3 547.7M736.9 564.4L744.8 570.5" stroke="#f2ffff" stroke-width="2.6" fill="none"/>
<path d="M741.2 644.1h7.2v12.6l-7.2-6.2z" fill="#fff"/>
<path d="M712.7 663L732.7 646.6L752.6 663" stroke="#fff" stroke-width="4" fill="none" stroke-linejoin="miter" stroke-miterlimit="6"/>
<path d="M717.2 663.8L732.7 651L748.1 663.8V677.9H735.8V668.1H729.6V677.9H717.2Z" fill="#fff"/>
<circle cx="756.4" cy="757.9" r="20" fill="#fff"/>
<g transform="translate(756.4 757.9)" fill="#0a4064">
<path d="M-6.3 -2.9C-6.7 -2.3 -7.0 -1.8 -7.0 -1.0C-7.0 -0.2 -6.5 0.9 -6.0 1.6C-5.5 2.4 -4.8 3.2 -3.9 3.5C-3.0 3.8 -1.5 3.1 -0.6 3.2C0.3 3.3 1.0 3.3 1.6 3.9C2.2 4.5 2.6 5.7 2.8 6.6C3.0 7.5 2.9 8.4 3.0 9.4C3.1 10.4 3.4 11.9 3.7 12.7C4.0 13.5 4.5 14.1 5.1 14.2C5.6 14.3 6.4 13.8 7.0 13.2C7.6 12.6 8.3 11.5 8.9 10.4C9.5 9.3 9.9 7.6 10.4 6.6C10.9 5.6 11.5 4.8 11.8 4.2C12.2 3.6 12.7 3.2 12.5 2.8C12.3 2.4 11.3 2.4 10.8 1.8C10.3 1.2 10.0 -0.1 9.6 -1.0C9.2 -1.9 9.1 -2.8 8.5 -3.4C7.9 -4.0 6.9 -4.5 6.1 -4.8C5.3 -5.1 4.5 -5.0 3.7 -5.3C2.9 -5.5 2.0 -6.1 1.3 -6.3C0.6 -6.5 0.1 -6.6 -0.6 -6.5C-1.3 -6.4 -2.2 -5.9 -2.9 -5.6C-3.6 -5.2 -4.2 -4.9 -4.8 -4.4C-5.4 -4.0 -5.9 -3.5 -6.3 -2.9Z"/>
<path d="M-3.9 -8.4C-3.6 -9.0 -2.3 -10.7 -1.5 -11.5C-0.7 -12.3 0.4 -12.6 0.9 -13.2C1.4 -13.8 1.0 -14.6 1.6 -15.1C2.2 -15.6 3.5 -15.9 4.7 -16.0C5.9 -16.1 7.4 -15.8 8.5 -15.4C9.6 -15.0 10.4 -14.4 11.3 -13.6C12.2 -12.8 13.1 -11.9 13.9 -10.8C14.7 -9.7 15.5 -8.4 16.1 -7.2C16.7 -6.0 17.2 -4.4 17.5 -3.4C17.8 -2.4 18.3 -1.3 18.1 -1.1C17.9 -0.9 16.7 -2.1 16.1 -2.2C15.5 -2.3 14.9 -1.8 14.4 -1.5C13.9 -1.2 13.7 -0.4 13.2 -0.3C12.7 -0.2 11.9 -0.5 11.5 -1.0C11.1 -1.5 11.0 -2.3 10.6 -3.2C10.2 -4.1 9.6 -5.5 8.9 -6.3C8.2 -7.1 7.4 -7.6 6.6 -7.9C5.8 -8.2 4.9 -8.1 4.2 -8.4C3.5 -8.7 2.9 -9.5 2.3 -9.6C1.7 -9.7 1.0 -9.4 0.4 -9.1C-0.2 -8.8 -0.9 -8.1 -1.5 -7.9C-2.1 -7.7 -3.0 -7.6 -3.4 -7.7C-3.8 -7.8 -4.2 -7.8 -3.9 -8.4Z"/>
<path d="M-17.2 4.7C-17.0 4.6 -15.8 7.6 -14.8 8.5C-13.8 9.4 -11.6 9.2 -11.0 9.9C-10.4 10.6 -11.1 12.4 -11.5 12.7C-11.9 13.0 -12.7 12.4 -13.4 11.8C-14.1 11.2 -15.2 10.1 -15.8 8.9C-16.4 7.7 -17.4 4.8 -17.2 4.7Z"/>
<path d="M-11.7 -13.6L-8.7 -15.5M-17.2 -5.8L-14.6 -9.6" stroke="#0a4064" stroke-width="1.3" fill="none"/>
<circle cx="-3.4" cy="-12.9" r="0.9"/><ellipse cx="11.8" cy="9.9" rx="0.7" ry="1.3" transform="rotate(20 11.8 9.9)"/>
<circle cx="3" cy="-12.9" r="0.9" fill="#cfe4f5"/><circle cx="8.4" cy="-9.2" r="1" fill="#e8f2fa"/>
<path d="M8.6 -5.2L13.4 1.2" stroke="#fff" stroke-width="0.9" fill="none"/>
</g>
<text x="236.7" y="390.5" stroke="#fff" stroke-width="0.55" font-family="Liberation Sans, sans-serif" font-size="36.6" font-weight="normal" fill="#000" textLength="365.6" lengthAdjust="spacingAndGlyphs">Dr. Emmanuel Garcia</text>
<text x="236.2" y="422.6" font-family="Liberation Sans, sans-serif" font-size="21.6" font-weight="bold" fill="#000" textLength="311.3" lengthAdjust="spacingAndGlyphs">Certified Nurse Practitioner</text>
<text x="808.0" y="469.7" font-family="Liberation Sans, sans-serif" font-size="28.5" font-weight="normal" fill="#fff" textLength="412.2" lengthAdjust="spacingAndGlyphs">egarcia@medicineforlife.com</text>
<text x="771.0" y="568.7" font-family="Liberation Sans, sans-serif" font-size="30.5" font-weight="normal" fill="#fff" textLength="216.3" lengthAdjust="spacingAndGlyphs">(303) 867-5309</text>
<text x="774.0" y="651.5" font-family="Liberation Sans, sans-serif" font-size="24.4" font-weight="normal" fill="#fff" textLength="164.3" lengthAdjust="spacingAndGlyphs">612 Warf Ave.</text>
<text x="774.0" y="685.1" font-family="Liberation Sans, sans-serif" font-size="24.2" font-weight="normal" fill="#fff" textLength="255.5" lengthAdjust="spacingAndGlyphs">Hollywood, CA 90210</text>
<text x="800.2" y="767.6" font-family="Liberation Sans, sans-serif" font-size="28.5" font-weight="normal" fill="#fff" textLength="411.5" lengthAdjust="spacingAndGlyphs">www.garciamedicsforlife.com</text>
</svg>
<style>
.ph{position:absolute;left:1427px;width:248px;height:25px;background:#808080}
.pt{position:absolute;white-space:nowrap;font-size:12px;line-height:1;color:#fff}
.it{position:absolute;white-space:nowrap;font-size:11px;line-height:12px;color:#fff}
.ly{position:absolute;left:1433px;white-space:nowrap;font-size:11px;line-height:12px;color:#fff}
.cb{position:absolute;top:291px;height:55px;background:linear-gradient(#5b5b5b,#434343);border:1px solid #2a2a2a;box-shadow:inset 1px 1px 0 #666}
</style>
<div class="a" style="left:1422px;top:100px;width:258px;height:887px;background:#4d4d4d"></div>
<div class="ph" style="top:105px"></div>
<svg class="a" style="left:1435px;top:110px" width="14" height="14"><rect x="0.75" y="0.75" width="12.5" height="12.5" fill="none" stroke="#fff" stroke-width="1.5"/><path d="M3.5 7h7" stroke="#fff" stroke-width="1.6"/></svg>
<div class="pt" style="left:1457px;top:112px;letter-spacing:0.25px">Information</div>
<div class="it" style="left:1437px;top:141.9px">Mouse:</div>
<div class="it" style="left:1493px;top:141.9px">( 1018 , 1867 )</div>
<div class="it" style="left:1437px;top:157.9px">Object:</div>
<div class="it" style="left:1493px;top:157.9px">( 0 , 0 ) 0 x 0 pixels</div>
<div class="it" style="left:1437px;top:184.9px">Red</div>
<div class="it" style="left:1494px;top:184.9px">: 192</div>
<div class="it" style="left:1549px;top:184.9px">Hue</div>
<div class="it" style="left:1606px;top:184.9px">: 0</div>
<div class="it" style="left:1437px;top:200.8px">Green</div>
<div class="it" style="left:1494px;top:200.8px">: 192</div>
<div class="it" style="left:1549px;top:200.8px">Saturation</div>
<div class="it" style="left:1606px;top:200.8px">: 0</div>
<div class="it" style="left:1437px;top:216.7px">Blue</div>
<div class="it" style="left:1494px;top:216.7px">: 192</div>
<div class="it" style="left:1549px;top:216.7px">Value</div>
<div class="it" style="left:1606px;top:216.7px">: 192</div>
<div class="it" style="left:1437px;top:232.8px">Hex</div>
<div class="it" style="left:1494px;top:232.8px">: #c0c0c0</div>
<div class="ph" style="top:255px"></div>
<svg class="a" style="left:1435px;top:260px" width="14" height="14"><rect x="0.75" y="0.75" width="12.5" height="12.5" fill="none" stroke="#fff" stroke-width="1.5"/><path d="M3.5 7h7" stroke="#fff" stroke-width="1.6"/></svg>
<div class="pt" style="left:1457px;top:262px;letter-spacing:-0.2px">Color Picker</div>
<div class="cb" style="left:1438px;width:90px"></div>
<div class="a" style="left:1446px;top:298px;width:57px;height:21px;background:#999"></div>
<div class="a" style="left:1511px;top:294px;width:1px;height:49px;background:#9a9a9a"></div>
<svg class="a" style="left:1515px;top:318px" width="9" height="5"><path d="M0 0h9l-4.5 5z" fill="#aaa"/></svg>
<div class="it" style="left:1443px;top:323px;width:60px;text-align:center;color:#8a8a8a">Stroke</div>
<div class="cb" style="left:1531px;width:39px"></div>
<svg class="a" style="left:1536px;top:304px" width="28" height="30" viewBox="0 0 28 30"><path d="M3 8l7-6v4h5v5h-5v3z" fill="#72d01c" stroke="#3f8a0a" stroke-width="0.6"/><path d="M25 21l-7-6v4h-5v5h5v3z" fill="#6fcf1a" stroke="#3f8a0a" stroke-width="0.6"/></svg>
<div class="cb" style="left:1573.5px;width:89.5px"></div>
<div class="a" style="left:1581px;top:298px;width:56px;height:21px;background:#fff"></div>
<div class="a" style="left:1646px;top:294px;width:1px;height:49px;background:#9a9a9a"></div>
<svg class="a" style="left:1650px;top:318px" width="9" height="5"><path d="M0 0h9l-4.5 5z" fill="#ddd"/></svg>
<div class="it" style="left:1579px;top:323px;width:60px;text-align:center">Fill</div>
<div class="ph" style="top:650px;width:231px;height:29px"></div>
<svg class="a" style="left:1434px;top:658px" width="13" height="12"><rect x="0.5" y="0.5" width="11.5" height="10.5" fill="none" stroke="#fff" stroke-width="1"/><path d="M3 5.75h6.5" stroke="#fff" stroke-width="1.2"/></svg>
<div class="pt" style="left:1456px;top:658px">Layer</div>
<svg class="a" style="left:1626px;top:655px" width="21" height="14" viewBox="0 0 21 14"><rect x="0" y="1" width="20" height="13" fill="#333"/><path d="M3 7.5l5 4.5 10.5-8.5-1.5-2.5-9 6.5-2.5-2.5z" fill="#fff"/></svg>
<div class="a" style="left:1427px;top:679px;width:227px;height:308px;background:#303030"></div>
<div class="a" style="left:1654px;top:679px;width:1px;height:308px;background:#3e3e3e"></div>
<div class="a" style="left:1655px;top:679px;width:4px;height:308px;background:#2b2b2b"></div>
<div class="ly" style="top:682.5px;letter-spacing:-0.25px">Filled Path</div>
<div class="ly" style="top:699.5px;letter-spacing:-0.25px">Filled Path</div>
<div class="ly" style="top:716.5px;letter-spacing:-0.25px">Filled Path</div>
<div class="ly" style="top:733.5px;letter-spacing:-0.25px">Filled Path</div>
<div class="ly" style="top:750.5px;letter-spacing:-0.25px">Filled Path</div>
<div class="ly" style="top:767.5px;letter-spacing:-0.25px">Filled Path</div>
<div class="ly" style="top:784.5px;letter-spacing:-0.25px">Filled Path</div>
<div class="ly" style="top:801.5px;letter-spacing:-0.25px">Filled Path</div>
<div class="ly" style="top:818.5px;letter-spacing:-0.25px">Filled Path</div>
<div class="ly" style="top:835.5px;letter-spacing:-0.25px">Filled Path</div>
<div class="ly" style="top:852.5px;letter-spacing:-0.25px">Filled Path</div>
<div class="ly" style="top:869.5px;letter-spacing:-0.45px">Ellipse</div>
<div class="ly" style="top:886.5px;letter-spacing:0.80px">Text</div>
<div class="ly" style="top:903.5px;letter-spacing:0.80px">Text</div>
<div class="ly" style="top:920.5px;letter-spacing:0.80px">Text</div>
<div class="ly" style="top:937.5px;letter-spacing:0.80px">Text</div>
<div class="ly" style="top:954.5px;letter-spacing:0.80px">Text</div>
<div class="ly" style="top:971.5px;letter-spacing:0.80px">Text</div>
<div class="a" style="left:1658.5px;top:648px;width:16.5px;height:339px;background:#444"></div>
<div class="a" style="left:1660px;top:701px;width:13.5px;height:176.5px;background:#656565"></div>
<svg class="a" style="left:1662px;top:653.500px" width="9" height="7"><path d="M1.200 5.200l3.300-3.200 3.300 3.200" stroke="#f4f4f4" stroke-width="1.500" fill="none"/></svg>
<div class="a" style="left:0;top:987px;width:1680px;height:23px;background:#333"></div>
<div class="t" style="left:2px;top:995px;font-size:11.5px;color:#d8d8d8">DrawPad Graphic Design Editor Free</div>
<div class="t" style="left:1447px;top:992.5px;font-size:13.8px;letter-spacing:-0.9px;color:#fff">37%</div>
<svg class="a" style="left:1477.5px;top:996.5px" width="6" height="4"><path d="M0 3.600l2.800-3.200 2.800 3.200z" fill="#ddd"/></svg>
<svg class="a" style="left:1492px;top:991px" width="18" height="18"><circle cx="9" cy="8.6" r="8" fill="#5c5c5c"/><path d="M5 8.6h8" stroke="#aaa" stroke-width="2"/></svg>
<svg class="a" style="left:1658px;top:991px" width="18" height="18"><circle cx="9" cy="8.6" r="8" fill="#5c5c5c"/><path d="M4.5 8.6h9M9 4.1v9" stroke="#ddd" stroke-width="2"/></svg>
<div class="a" style="left:1520px;top:996px;width:129px;height:4px;background:#1e1e1e;border-bottom:1px solid #999;border-radius:2px"></div>
<svg class="a" style="left:1526px;top:992px" width="10" height="14"><path d="M0.5 0.5h8v8.5l-4 4-4-4z" fill="#e8e8e8" stroke="#bbb" stroke-width="0.8"/></svg>
<div class="a" style="left:1520px;top:1008px;width:1px;height:2px;background:#aaa"></div>
<div class="a" style="left:1647px;top:1008px;width:1px;height:2px;background:#aaa"></div>
</body></html>
